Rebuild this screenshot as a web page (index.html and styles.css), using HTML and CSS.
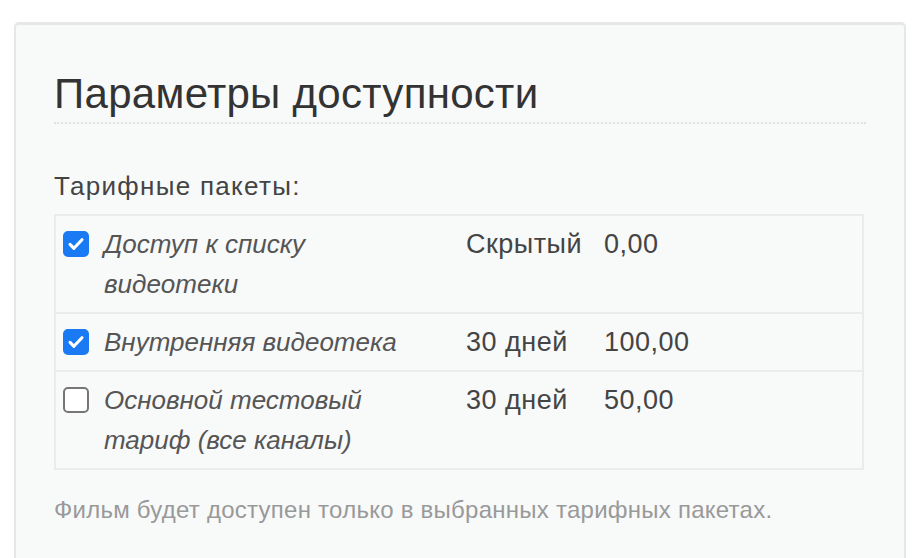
FILE: index.html
```html
<!DOCTYPE html>
<html>
<head>
  <meta charset="UTF-8">
  <title>Параметры доступности</title>
  <link rel="stylesheet" href="styles.css">
</head>
<body>
  <div class="panel">
    <h2 class="panel-title">Параметры доступности</h2>

    <div class="field">
      <label class="field-label">Тарифные пакеты:</label>
      <table class="plans">
        <tr>
          <td class="plan-check"><span class="check checked"><svg viewBox="0 0 24 24"><path d="M5.5 12.5l4.2 4.2 8.8-9.4"/></svg></span></td>
          <td class="plan-name">Доступ к списку видеотеки</td>
          <td class="plan-period">Скрытый</td>
          <td class="plan-price">0,00</td>
        </tr>
        <tr>
          <td class="plan-check"><span class="check checked"><svg viewBox="0 0 24 24"><path d="M5.5 12.5l4.2 4.2 8.8-9.4"/></svg></span></td>
          <td class="plan-name">Внутренняя видеотека</td>
          <td class="plan-period">30 дней</td>
          <td class="plan-price">100,00</td>
        </tr>
        <tr>
          <td class="plan-check"><span class="check"></span></td>
          <td class="plan-name">Основной тестовый тариф (все каналы)</td>
          <td class="plan-period">30 дней</td>
          <td class="plan-price">50,00</td>
        </tr>
      </table>
      <p class="help">Фильм будет доступен только в выбранных тарифных пакетах.</p>
    </div>
  </div>
</body>
</html>
```

FILE: styles.css
```css
/* Base */
html, body {
  overflow: hidden;
}

body {
  margin: 0;
  padding: 22px 18px 0 14px;
  background: #fff;
  font-family: "Liberation Sans", Arial, sans-serif;
  color: #333;
}

/* Panel */
.panel {
  background: #f8f9f9;
  border: 2px solid #e5e7e9;
  border-top-width: 3px;
  border-bottom: none;
  border-radius: 5px 5px 0 0;
  padding: 45px 38px 40px 38px;
  height: 536px;
  box-sizing: border-box;
}

.panel-title {
  font-size: 42px;
  font-weight: normal;
  letter-spacing: 0.3px;
  line-height: 48px;
  margin: 0;
  padding-bottom: 4px;
  border-bottom: 2px dotted #dfe1e2;
  color: #333;
}

/* Field */
.field {
  margin-top: 46px;
}

.field-label {
  display: block;
  font-size: 26px;
  letter-spacing: 1.3px;
  color: #444;
  line-height: 32px;
  margin-bottom: 12px;
}

.plans {
  width: 810px;
  border-collapse: collapse;
  border: 2px solid #eaecec;
}

.plans td {
  border-top: 2px solid #eaecec;
  padding: 8px 0;
  vertical-align: top;
  font-size: 27px;
  letter-spacing: 0.5px;
  line-height: 40px;
  color: #444;
}

.plan-check {
  width: 40px;
  padding-left: 8px !important;
}

.plan-name {
  font-style: italic;
  width: 310px;
  padding-right: 52px !important;
  font-size: 26px !important;
  letter-spacing: 0 !important;
  color: #555 !important;
}

.plan-period {
  width: 138px;
}

/* Checkbox */
.check {
  display: block;
  width: 26px;
  height: 26px;
  margin-top: 7px;
  margin-left: -1px;
  box-sizing: border-box;
  border: 2px solid #767676;
  border-radius: 5px;
  background: #fff;
}

.check.checked {
  background: #1a7af3;
  border-color: #1a7af3;
}

.check svg {
  display: block;
  width: 22px;
  height: 22px;
  fill: none;
  stroke: #fff;
  stroke-width: 3.4;
  stroke-linecap: round;
  stroke-linejoin: round;
}

.help {
  margin: 25px 0 0 0;
  font-size: 24px;
  letter-spacing: 0.25px;
  line-height: 30px;
  color: #999;
}
```
